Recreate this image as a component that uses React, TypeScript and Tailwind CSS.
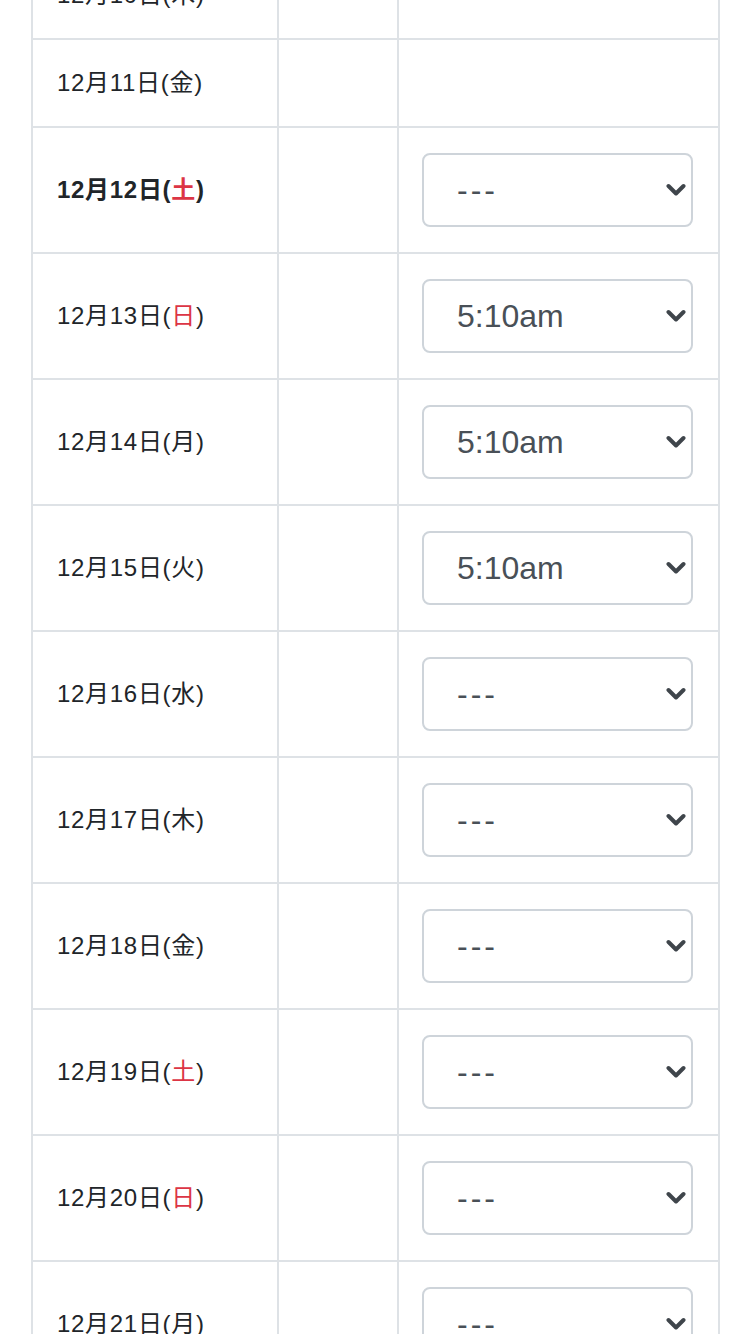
import { ChangeEvent, useState } from "react";

type Day = {
  date: string;
  wd: string;
  holiday?: boolean;
  today?: boolean;
  time?: string;
};

const days: Day[] = [
  { date: "12月10日", wd: "木" },
  { date: "12月11日", wd: "金" },
  { date: "12月12日", wd: "土", holiday: true, today: true, time: "---" },
  { date: "12月13日", wd: "日", holiday: true, time: "5:10am" },
  { date: "12月14日", wd: "月", time: "5:10am" },
  { date: "12月15日", wd: "火", time: "5:10am" },
  { date: "12月16日", wd: "水", time: "---" },
  { date: "12月17日", wd: "木", time: "---" },
  { date: "12月18日", wd: "金", time: "---" },
  { date: "12月19日", wd: "土", holiday: true, time: "---" },
  { date: "12月20日", wd: "日", holiday: true, time: "---" },
  { date: "12月21日", wd: "月", time: "---" },
];

const options = ["---", "4:50am", "5:00am", "5:10am", "5:20am", "5:30am"];

function TimeSelect({ value }: { value: string }) {
  const [v, setV] = useState(value);
  return (
    <div className="relative w-[271px]">
      <select
        value={v}
        onChange={(e: ChangeEvent<HTMLSelectElement>) => setV(e.target.value)}
        className={`block h-[74px] w-full appearance-none rounded-[8px] border-2 border-[#ced4da] bg-white pl-[33px] pr-[40px] text-[32px] text-[#495057] outline-none ${
          v === "---" ? "tracking-[3px]" : ""
        }`}
        style={{ fontFamily: '"Liberation Sans", Arial, sans-serif' }}
      >
        {options.map((o) => (
          <option key={o} value={o}>
            {o}
          </option>
        ))}
      </select>
      {/* chevron */}
      <svg
        className="pointer-events-none absolute right-[7px] top-1/2 -translate-y-1/2"
        width="20"
        height="14"
        viewBox="0 0 20 14"
      >
        <polyline
          points="2.5,3 10,10.5 17.5,3"
          fill="none"
          stroke="#3f454b"
          strokeWidth="4"
          strokeLinecap="round"
          strokeLinejoin="round"
        />
      </svg>
    </div>
  );
}

export default function App() {
  return (
    <div
      className="min-h-screen overflow-hidden bg-white text-[#212529]"
      style={{ fontFamily: '"Liberation Sans", "Noto Sans CJK JP", sans-serif' }}
    >
      <table className="-mt-[50px] ml-[31px] w-[689px] table-fixed border-collapse">
        <colgroup>
          <col className="w-[246px]" />
          <col className="w-[120px]" />
          <col />
        </colgroup>
        <tbody>
          {days.map((d) => (
            <tr key={d.date}>
              <td
                className={`border-2 border-[#dee2e6] px-[24px] py-[25px] align-middle text-[24px] leading-[36px] tracking-[0.7px] whitespace-nowrap ${
                  d.today ? "font-bold" : ""
                }`}
              >
                {d.date}(
                <span className={d.holiday ? "text-[#dc3545]" : ""}>{d.wd}</span>)
              </td>
              <td className="border-2 border-[#dee2e6]" />
              <td className="border-2 border-[#dee2e6] px-[23px] py-[25px] align-middle">
                {d.time && <TimeSelect value={d.time} />}
              </td>
            </tr>
          ))}
        </tbody>
      </table>
    </div>
  );
}
